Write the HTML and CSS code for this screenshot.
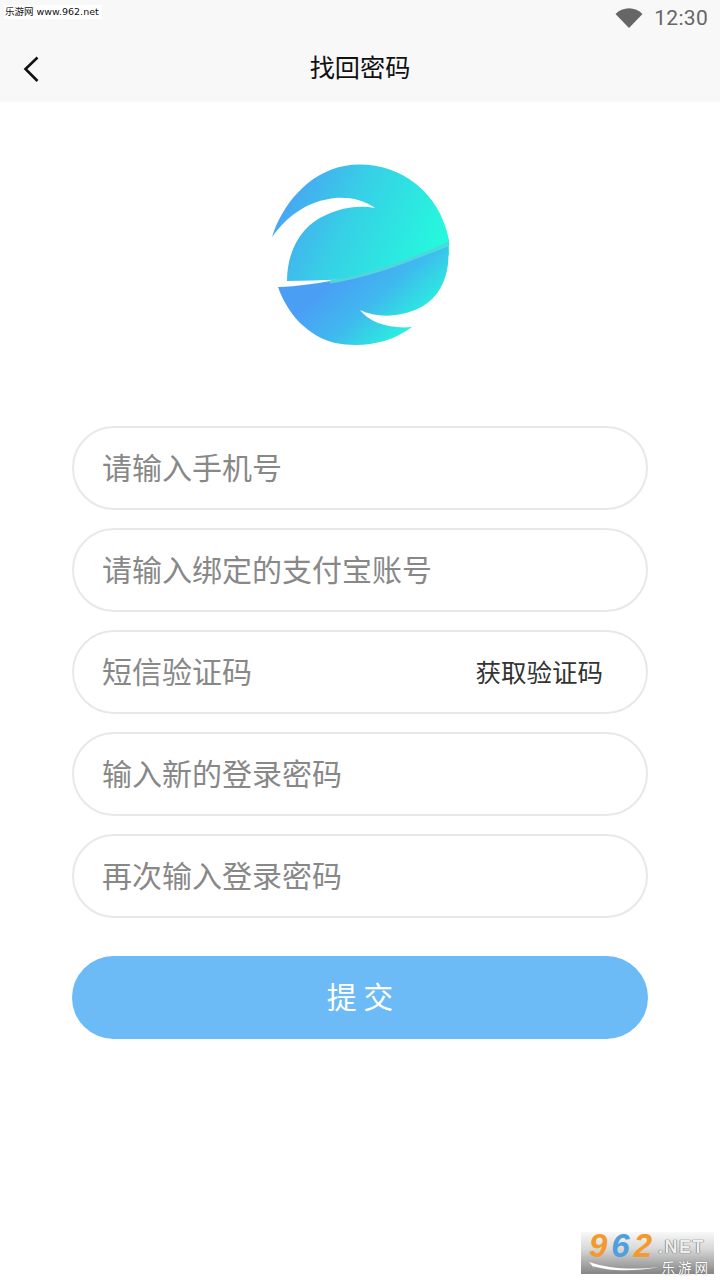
FILE: index.html
```html
<!DOCTYPE html>
<html lang="zh-CN">
<head>
<meta charset="utf-8">
<title>找回密码</title>
<link rel="stylesheet" href="styles.css">
</head>
<body>
<div class="page">
  <header class="top">
    <div class="status">
      <svg class="wifi" viewBox="0 0 28 20" width="28" height="20"><path d="M0.5 6C4 2.5 9 0.3 14 0.3S24 2.5 27.5 6L14 20z" fill="#666"/></svg>
      <span class="time">12:30</span>
    </div>
    <div class="nav">
      <svg class="back" viewBox="0 0 18 28" width="18" height="28"><path d="M15.5 2.5L3.5 14l12 12" fill="none" stroke="#111" stroke-width="2.6"/></svg>
      <h1 class="title">找回密码</h1>
    </div>
  </header>
  <div class="logo-wrap">
    <svg class="logo" viewBox="0 0 200 200" width="200" height="200">
      <defs>
        <linearGradient id="g1" gradientUnits="userSpaceOnUse" x1="20" y1="30" x2="175" y2="100">
          <stop offset="0" stop-color="#4a9ff5"/><stop offset="0.45" stop-color="#37d0e6"/><stop offset="1" stop-color="#25f8dd"/>
        </linearGradient>
        <linearGradient id="g2" gradientUnits="userSpaceOnUse" x1="75" y1="125" x2="135" y2="192">
          <stop offset="0" stop-color="#4a9ff5"/><stop offset="0.45" stop-color="#40b8ef"/><stop offset="1" stop-color="#27f5dc"/>
        </linearGradient>
      </defs>
      <path fill="url(#g1)" d="M12 82C22 50 48 18 84 11C130 3 178 30 189 85L189 100L90 125C70 124 50 126 27 126C27 95 42 70 66 60C82 52 100 50 115 53C104 45 90 42 75 43C48 46 28 60 12 82Z"/>
      <path fill="url(#g2)" d="M18 132C60 131 130 116 188 91C191 120 180 145 155 155C135 163 115 162 100 155C110 168 130 174 152 172C130 189 100 193 75 188C48 181 28 160 18 132Z"/>
      <path d="M70 127C110 121 150 106 189 88" fill="none" stroke="#4fd6dc" stroke-width="3"/>
    </svg>
  </div>
  <form class="form">
    <div class="field"><span class="hint">请输入手机号</span></div>
    <div class="field"><span class="hint">请输入绑定的支付宝账号</span></div>
    <div class="field field-code"><span class="hint">短信验证码</span><span class="get-code">获取验证码</span></div>
    <div class="field"><span class="hint">输入新的登录密码</span></div>
    <div class="field"><span class="hint">再次输入登录密码</span></div>
    <div class="submit">提 交</div>
  </form>
  <div class="mark-top">乐游网 www.962.net</div>
  <div class="mark-bottom">
    <svg class="swoosh" viewBox="0 0 70 14" width="70" height="14"><path d="M0 3C20 10 45 11 70 8C45 13 18 12 4 7L6 10z" fill="#fff"/></svg>
    <div class="mark-line"><span class="n9">9</span><span class="n6">6</span><span class="n2">2</span><span class="net">.NET</span></div>
    <div class="mark-cn">乐游网</div>
  </div>
</div>
</body>
</html>
```
FILE: styles.css
```css
* { box-sizing: border-box; }
html, body { margin: 0; padding: 0; background: #fff; }
body { font-family: "Noto Sans CJK SC", "Noto Sans", sans-serif; }
.page { position: relative; width: 720px; height: 1280px; overflow: hidden; background: #fff; }
.top { height: 102px; background: #f8f8f8; }
.status { height: 36px; display: flex; justify-content: flex-end; align-items: center; padding-right: 12px; }
.wifi { margin-right: 11px; }
.time { font-family: Roboto, sans-serif; font-size: 21px; color: #666; letter-spacing: 0.3px; }
.nav { position: relative; height: 66px; display: flex; align-items: center; justify-content: center; padding-bottom: 6px; }
.back { position: absolute; left: 22px; top: 19px; }
.title { margin: 0; font-size: 25.2px; font-weight: 400; color: #111; line-height: 40px; }
.logo-wrap { height: 324px; padding-top: 53px; display: flex; justify-content: center; }
.logo { display: block; }
.form { padding: 0 72px; display: flex; flex-direction: column; gap: 18px; }
.field { height: 84px; border: 2px solid #e8e8e8; border-radius: 42px; display: flex; align-items: center; justify-content: space-between; padding: 0 43px 4px 28px; background: #fff; }
.hint { font-size: 30px; color: #888; line-height: 1; }
.get-code { font-size: 25.5px; color: #333; line-height: 1; margin-top: 2px; }
.submit { margin-top: 20px; height: 83px; border-radius: 42px; background: #6dbbf6; color: #fff; font-size: 30px; display: flex; align-items: center; justify-content: center; padding-bottom: 5px; }
.mark-top { position: absolute; left: 4px; top: 5px; width: 98px; height: 14px; background: #fff; color: #111; font-family: "DejaVu Sans", "Noto Sans CJK SC", sans-serif; font-size: 9.5px; line-height: 14px; padding-left: 1px; white-space: nowrap; }
.mark-bottom { position: absolute; left: 581px; top: 1232px; width: 133px; height: 42px; background: linear-gradient(#f8f8f8 0%, #d8d8d8 40%, #858585 100%); padding-left: 8px; }
.swoosh { position: absolute; left: 8px; top: 27px; }
.mark-line { position: relative; font-family: "Liberation Sans", sans-serif; font-weight: 700; font-style: italic; font-size: 33px; line-height: 27px; height: 27px; white-space: nowrap; letter-spacing: 4px; }
.n9 { color: #f29a2e; }
.n6 { color: #4f9fdc; }
.n2 { color: #f29a2e; }
.net { font-size: 18px; line-height: 1; vertical-align: 4px; font-style: normal; color: #eee; text-shadow: 0 0 1px #555, 0 0 1px #555; margin-left: 2px; letter-spacing: 1.5px; }
.mark-cn { position: relative; margin-top: 2px; color: #fff; font-size: 13.5px; line-height: 12px; text-align: right; padding-right: 3px; letter-spacing: 3px; text-shadow: 0 0 1px #555; }
```
